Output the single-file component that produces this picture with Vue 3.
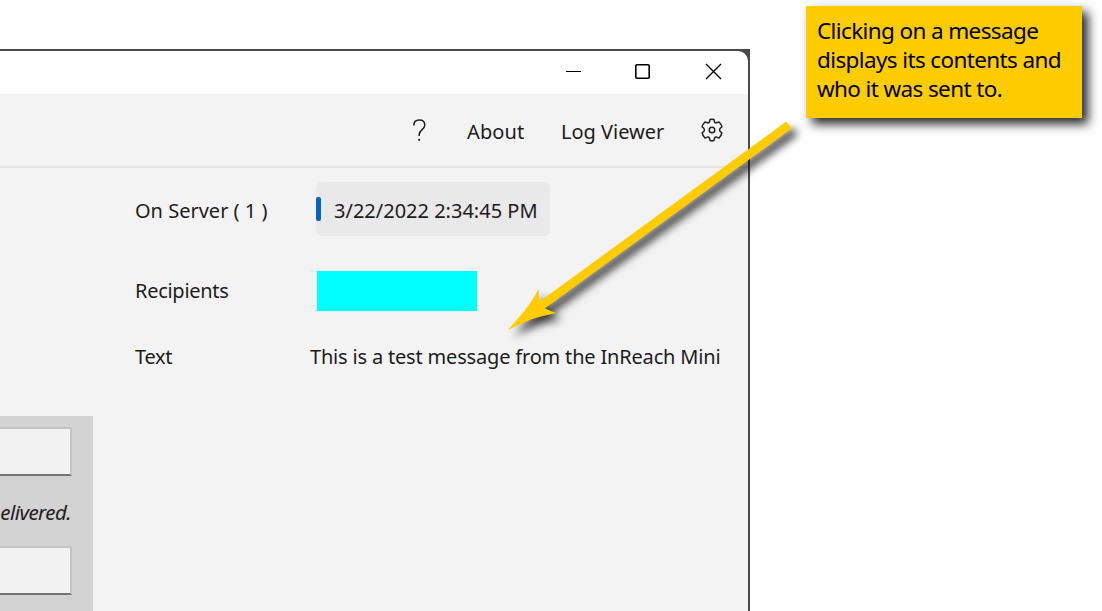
<script setup>
const noteLines = ['Clicking on a message', 'displays its contents and', 'who it was sent to.']
</script>

<template>
  <div class="stage">
    <section class="window">
      <header class="titlebar">
        <svg class="controls" width="160" height="18" viewBox="0 0 160 18" fill="none" stroke="#000">
          <path d="M0 9.5H15" stroke-width="1" />
          <rect x="69.800" y="2.800" width="13.400" height="13.400" rx="1.200" stroke-width="1.600" />
          <path d="M140 2L155 17M155 2L140 17" stroke-width="1.4" />
        </svg>
      </header>
      <nav class="toolbar">
        <svg class="help" width="14" height="23" viewBox="0 0 14 23" fill="none" stroke="#222" stroke-width="1.5">
          <path d="M.8 6.500C.8 3 3 1 6.300 1C9.800 1 11.800 3 11.800 6C11.800 10.700 6.200 10.500 6.200 15.600V17" />
          <circle cx="6.200" cy="20.800" r="1.100" fill="#222" stroke="none" />
        </svg>
        <span class="about">About</span>
        <span class="log">Log Viewer</span>
        <svg class="gear" width="22" height="24" viewBox="0 0 22 24" fill="none" stroke="#222" stroke-width="1.5" stroke-linejoin="round">
          <path d="M9 1.500Q11 1 13 1.500L13.600 4.100Q14.200 5.100 15.400 4.800L18 4Q20.200 6 20.900 8.700L19 10.500Q18.200 11.900 19 13.300L20.900 15Q20.200 17.900 18 20L15.400 19.100Q14.200 18.900 13.600 20L13 22.400Q11 22.900 9 22.400L8.400 20Q7.800 18.900 6.600 19.100L4 20Q1.800 17.900 1.100 15L3 13.300Q3.800 11.900 3 10.500L1.100 8.700Q1.800 6 4 4L6.600 4.800Q7.800 5.100 8.400 4.100Z" />
          <circle cx="11" cy="12" r="2.800" />
        </svg>
      </nav>
      <main class="body">
        <aside class="sidebar">
          <div class="panel">
            <div class="field"></div>
            <p class="hint">elivered.</p>
            <div class="field"></div>
          </div>
        </aside>
        <div class="details">
          <span class="label server">On Server ( 1 )</span>
          <div class="pill"><i class="marker"></i><span class="date">3/22/2022 2:34:45 PM</span></div>
          <span class="label recipients">Recipients</span>
          <div class="redacted"></div>
          <span class="label text">Text</span>
          <span class="message">This is a test message from the InReach Mini</span>
        </div>
      </main>
    </section>

    <svg class="arrow" width="340" height="260" viewBox="490 105 340 260">
      <path fill="#fc0" d="M786.300 121.600L791.700 128.500L545 308.300Q550 311 556.300 313Q542 315.800 531 319.500Q519 324.500 508 330Q516.500 320 524.700 310.700Q532.500 301 538.700 289Q538.300 295 540 301.300Z" />
    </svg>
    <div class="note">
      <div v-for="(line, i) in noteLines" :key="i">{{ line }}</div>
    </div>
  </div>
</template>

<style>
body { margin: 0; overflow: hidden; background: #fff; }
</style>

<style scoped>
* { box-sizing: border-box; }
.stage {
  position: relative;
  width: 1102px;
  height: 611px;
  overflow: hidden;
  padding-top: 49px;
  background: #fff;
  color: #1c1c1c;
  font: 20px/28px "Noto Sans", "Open Sans", sans-serif;
  white-space: nowrap;
}
.window {
  width: 750px;
  height: 562px;
  padding: 2px 2px 0 0;
  background: #4b4a4b;
}
.titlebar {
  height: 43px;
  padding: 11px 0 0 566px;
  background: #fff;
  border-top-right-radius: 10px;
}
.controls, .help, .gear { display: block; }
.toolbar {
  display: flex;
  align-items: flex-start;
  height: 74px;
  border-bottom: 2px solid #e5e5e5;
  background: #f3f3f3;
}
.help { margin: 25px 0 0 413px; }
.about { width: 94px; margin: 24px 0 0 40px; letter-spacing: .1px; }
.log { width: 140px; margin-top: 24px; letter-spacing: 0; }
.gear { margin-top: 24px; }
.body {
  display: grid;
  grid-template-columns: 93px 1fr;
  height: 443px;
  background: #f3f3f3;
}
.sidebar { padding-top: 248px; overflow: hidden; }
.panel {
  height: 195px;
  padding-top: 11px;
  background: #d3d3d3;
}
.field {
  width: 72px;
  height: 49px;
  background: #f2f2f2;
  border: solid #c5c5c5;
  border-width: 2px 2px 2px 0;
  border-bottom-color: #757575;
}
.hint {
  display: flex;
  justify-content: flex-end;
  width: 71px;
  height: 70px;
  margin: 0;
  padding-top: 22px;
  font-size: 20.5px;
  font-style: italic;
  letter-spacing: -.55px;
}
.details {
  display: grid;
  grid-template-columns: 175px 1fr;
  grid-template-rows: 82px 78px 53px;
  align-content: start;
  padding-left: 42px;
}
.label { padding-top: 29px; letter-spacing: -.28px; }
.server { letter-spacing: 0; }
.recipients { padding-top: 27px; }
.text { padding-top: 15px; }
.pill {
  display: flex;
  align-items: center;
  width: 234px;
  height: 54px;
  margin: 14px 0 0 6px;
  background: #e9e9e9;
  border-radius: 6px;
}
.marker { width: 5px; height: 24px; margin-right: 13px; border-radius: 2px; background: #0067c0; }
.date { padding-top: 3px; letter-spacing: 0; }
.redacted { width: 160px; height: 40px; margin: 21px 0 0 7px; background: #0ff; }
.message { padding-top: 15px; letter-spacing: -.18px; }
.arrow {
  position: absolute;
  left: 490px;
  top: 105px;
  filter: drop-shadow(6px 6px 4px rgba(0, 0, 0, .75));
}
.note {
  position: absolute;
  left: 805.5px;
  top: 6px;
  width: 276px;
  height: 112px;
  padding: 10px 0 0 11.5px;
  background: #fc0;
  box-shadow: 6px 6px 10px rgba(0, 0, 0, .85);
  color: #000;
  font-size: 22.5px;
  line-height: 29px;
  letter-spacing: -.62px;
}
</style>
